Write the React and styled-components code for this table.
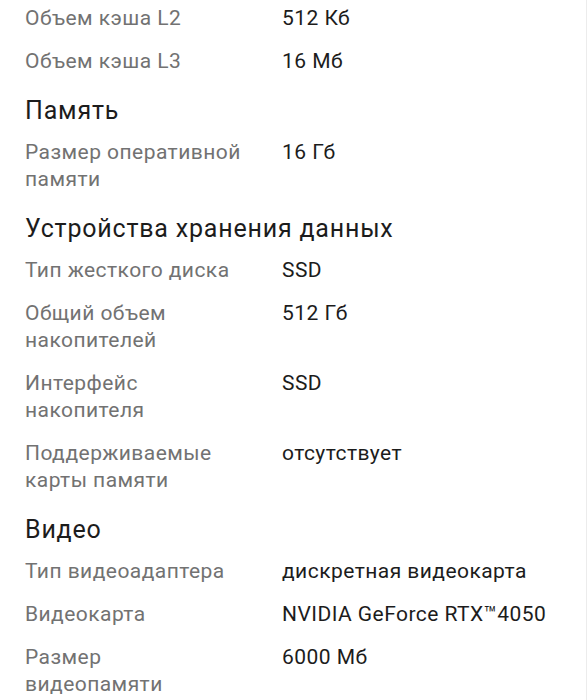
import React from 'react';
import styled, { createGlobalStyle } from 'styled-components';

const GlobalStyle = createGlobalStyle`
  html, body {
    margin: 0;
    padding: 0;
    background: #ffffff;
  }
  body {
    font-family: Roboto, "Noto Sans", "Liberation Sans", sans-serif;
    -webkit-font-smoothing: antialiased;
  }
`;

const Page = styled.div`
  width: 587px;
  height: 700px;
  overflow: hidden;
  box-sizing: border-box;
  border-right: 1px solid #ececec;
  background: #fff;
`;

const Specs = styled.div`
  display: flex;
  flex-direction: column;
  margin-top: -3px;
  padding: 0 25px;
`;

const SectionTitle = styled.h2`
  margin: 0;
  padding: 12px 0 4px;
  font-size: 25px;
  line-height: 32px;
  letter-spacing: 0.8px;
  font-weight: 400;
  color: #1c1c1c;
`;

const Row = styled.div`
  display: grid;
  grid-template-columns: 217px 1fr;
  column-gap: 40px;
  padding: 8px 0;
  font-size: 21px;
  line-height: 27px;
  letter-spacing: 0.45px;
`;

const Label = styled.div`
  color: #727272;
`;

const Value = styled.div`
  color: #1c1c1c;
`;

const sections = [
  {
    rows: [
      ['Объем кэша L2', '512 Кб'],
      ['Объем кэша L3', '16 Мб'],
    ],
  },
  {
    title: 'Память',
    rows: [['Размер оперативной памяти', '16 Гб']],
  },
  {
    title: 'Устройства хранения данных',
    rows: [
      ['Тип жесткого диска', 'SSD'],
      ['Общий объем накопителей', '512 Гб'],
      ['Интерфейс накопителя', 'SSD'],
      ['Поддерживаемые карты памяти', 'отсутствует'],
    ],
  },
  {
    title: 'Видео',
    rows: [
      ['Тип видеоадаптера', 'дискретная видеокарта'],
      ['Видеокарта', 'NVIDIA GeForce RTX™4050'],
      ['Размер видеопамяти', '6000 Мб'],
    ],
  },
];

export default function App() {
  return (
    <>
      <GlobalStyle />
      <Page>
        <Specs>
          {sections.map((section, i) => (
            <React.Fragment key={i}>
              {section.title && <SectionTitle>{section.title}</SectionTitle>}
              {section.rows.map(([label, value]) => (
                <Row key={label}>
                  <Label>{label}</Label>
                  <Value>{value}</Value>
                </Row>
              ))}
            </React.Fragment>
          ))}
        </Specs>
      </Page>
    </>
  );
}
